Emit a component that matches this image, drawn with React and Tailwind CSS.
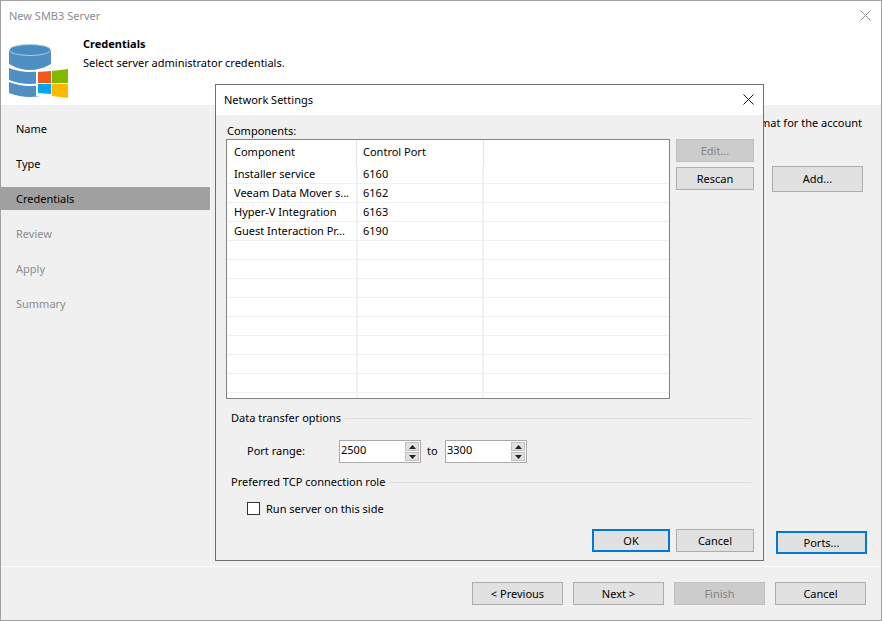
import React from 'react';

const Btn = ({ children, wide, primary, disabled, tall }) => {
  const width = wide ? 'w-[91px]' : 'w-[78px]';
  const height = tall ? 'h-[26px]' : 'h-[23px]';
  let look = 'bg-[#e1e1e1] border border-[#adadad] text-black';
  if (primary) look = 'bg-[#e1e1e1] border-2 border-[#0078d7] text-black';
  if (disabled) look = 'bg-[#cccccc] border border-[#bfbfbf] text-[#838383]';
  return (
    <div className={`${width} ${height} pt-[1px] shrink-0 flex items-center justify-center ${look}`}>{children}</div>
  );
};

const WizardIcon = () => (
  <svg width="60" height="54" viewBox="0 0 60 54" className="shrink-0 mt-[13px]">
    <path d="M0 6 V20 Q21 32 42 20 V6 Z" fill="#4f8fc4" />
    <path d="M0 24 Q21 32 42 24 V36 Q21 44 0 36 Z" fill="#4f8fc4" />
    <path d="M0 38 Q21 46 42 38 V49 Q21 57 0 49 Z" fill="#4f8fc4" />
    <ellipse cx="21" cy="6" rx="20.5" ry="5.5" fill="#4a8bc1" stroke="#a9cde8" strokeWidth="1" />
    <polygon points="27,26 60,22 60,54 27,52" fill="#ffffff" />
    <polygon points="29,28 42,27 42,39 29,39" fill="#f25a1d" />
    <polygon points="43,27 59,25 59,39 43,39" fill="#7fba00" />
    <polygon points="29,40 42,40 42,50 29,49" fill="#00a4ef" />
    <polygon points="43,40 59,40 59,54 43,52" fill="#ffb900" />
  </svg>
);

const CloseX = ({ color, className }) => (
  <svg width="11" height="11" viewBox="0 0 11 11" className={className}>
    <path d="M0.5 0.5 L10.5 10.5 M10.5 0.5 L0.5 10.5" stroke={color} strokeWidth="1" fill="none" />
  </svg>
);

const Spinner = ({ value, width }) => (
  <div className={`${width} h-[23px] bg-white border border-[#a9a9a9] flex justify-between p-[1px]`}>
    <span className="leading-[16px]">{value}</span>
    <div className="w-[14px] flex flex-col gap-[1px]">
      <div className="flex-1 bg-[#e1e1e1] border border-[#c0c0c0] flex items-center justify-center">
        <svg width="7" height="4" viewBox="0 0 7 4"><path d="M3.5 0 L7 4 L0 4 Z" fill="#222" /></svg>
      </div>
      <div className="flex-1 bg-[#e1e1e1] border border-[#c0c0c0] flex items-center justify-center">
        <svg width="7" height="4" viewBox="0 0 7 4"><path d="M0 0 L7 0 L3.5 4 Z" fill="#222" /></svg>
      </div>
    </div>
  </div>
);

const Group = ({ title }) => (
  <div className="flex items-center gap-[4px] h-[16px]">
    <span className="whitespace-nowrap">{title}</span>
    <div className="flex-1 h-[1px] bg-[#dcdcdc]" />
  </div>
);

const rows = [
  ['Installer service', '6160'],
  ['Veeam Data Mover s...', '6162'],
  ['Hyper-V Integration', '6163'],
  ['Guest Interaction Pr...', '6190'],
  ['', ''], ['', ''], ['', ''], ['', ''], ['', ''], ['', ''], ['', ''], ['', ''],
];

const steps = [
  { name: 'Name' },
  { name: 'Type' },
  { name: 'Credentials', active: true },
  { name: 'Review', off: true },
  { name: 'Apply', off: true },
  { name: 'Summary', off: true },
];

const NetworkSettings = () => (
  <div className="absolute left-[214px] top-[83px] w-[549px] h-[477px] bg-[#f0f0f0] border border-[#707070] flex flex-col">
    <div className="h-[30px] shrink-0 bg-white flex items-center justify-between pl-[8px] pr-[9px]">
      <span>Network Settings</span>
      <CloseX color="#1a1a1a" className="mb-[1px]" />
    </div>
    <div className="pl-[11px] pt-[7px] h-[24px] shrink-0 leading-[17px]">Components:</div>
    <div className="flex gap-[6px] pl-[10px]">
      <div className="w-[444px] h-[260px] bg-white border border-[#828282] overflow-hidden flex flex-col">
        <div className="flex h-[25px] items-center shrink-0">
          <div className="w-[130px] pl-[7px] h-full flex items-center border-r border-[#e5e5e5]">Component</div>
          <div className="w-[127px] pl-[6px] h-full flex items-center border-r border-[#e5e5e5]">Control Port</div>
        </div>
        {rows.map((r, i) => (
          <div key={i} className="flex h-[19px] shrink-0 items-center border-b border-[#eff0f1]">
            <div className="w-[131px] pl-[7px] h-full flex items-center whitespace-nowrap border-r-2 border-[#eef3fa]">{r[0]}</div>
            <div className="w-[126px] pl-[5px] h-full flex items-center border-r-2 border-[#eef3fa]">{r[1]}</div>
          </div>
        ))}
        <div className="flex flex-1">
          <div className="w-[131px] border-r-2 border-[#eef3fa]" />
          <div className="w-[126px] border-r-2 border-[#eef3fa]" />
        </div>
      </div>
      <div className="flex flex-col gap-[5px]">
        <Btn disabled>Edit...</Btn>
        <Btn>Rescan</Btn>
      </div>
    </div>
    <div className="pl-[15px] pr-[12px] pt-[11px]">
      <Group title="Data transfer options" />
    </div>
    <div className="flex items-center pl-[31px] pt-[14px] h-[37px]">
      <span className="w-[92px]">Port range:</span>
      <Spinner value="2500" width="w-[82px]" />
      <span className="w-[24px] pl-[6px]">to</span>
      <Spinner value="3300" width="w-[82px]" />
    </div>
    <div className="pl-[15px] pr-[12px] pt-[11px]">
      <Group title="Preferred TCP connection role" />
    </div>
    <div className="flex items-center gap-[6px] pl-[31px] pt-[12px]">
      <div className="w-[13px] h-[13px] bg-white border border-[#333333]" />
      <span className="leading-[13px]">Run server on this side</span>
    </div>
    <div className="flex justify-end gap-[6px] pr-[9px] mt-[14px]">
      <Btn primary>OK</Btn>
      <Btn>Cancel</Btn>
    </div>
  </div>
);

export default function App() {
  return (
    <div className="relative w-[882px] h-[621px] flex flex-col bg-[#f0f0f0] border border-[#a0a0a0] text-[11px] text-black font-['Noto_Sans','Open_Sans',sans-serif] overflow-hidden">
      <div className="bg-white h-[104px] shrink-0 flex flex-col">
        <div className="h-[30px] shrink-0 flex items-center justify-between pl-[8px] pr-[10px] text-[#8c8c8c]">
          <span>New SMB3 Server</span>
          <CloseX color="#8a8a8a" className="mb-[2px]" />
        </div>
        <div className="flex pl-[8px] gap-[14px]">
          <WizardIcon />
          <div className="flex flex-col">
            <span className="font-bold leading-[20px] mt-[3px]">Credentials</span>
            <span className="leading-[17px]">Select server administrator credentials.</span>
          </div>
        </div>
      </div>
      <div className="flex flex-1 min-h-0">
        <div className="w-[210px] shrink-0 pt-[12px] flex flex-col gap-[12px] border-r border-[#f8f8f8]">
          {steps.map((s) => (
            <div
              key={s.name}
              className={`h-[23px] pl-[15px] pt-[1px] flex items-center ${s.active ? 'bg-[#a0a0a0]' : ''} ${s.off ? 'text-[#8c8c8c]' : ''}`}
            >
              {s.name}
            </div>
          ))}
        </div>
        <div className="flex-1 flex flex-col items-end">
          <div className="mt-[10px] h-[17px] mr-[19px] whitespace-nowrap">format for the account</div>
          <div className="mt-[34px] mr-[18px]"><Btn wide tall>Add...</Btn></div>
          <div className="mt-auto mb-[12px] mr-[14px]"><Btn wide primary>Ports...</Btn></div>
        </div>
      </div>
      <div className="h-[54px] shrink-0 border-t border-white flex justify-end gap-[10px] pr-[15px] pt-[15px]">
        <Btn wide>&lt; Previous</Btn>
        <Btn wide>Next &gt;</Btn>
        <Btn wide disabled>Finish</Btn>
        <Btn wide>Cancel</Btn>
      </div>
      <NetworkSettings />
    </div>
  );
}
